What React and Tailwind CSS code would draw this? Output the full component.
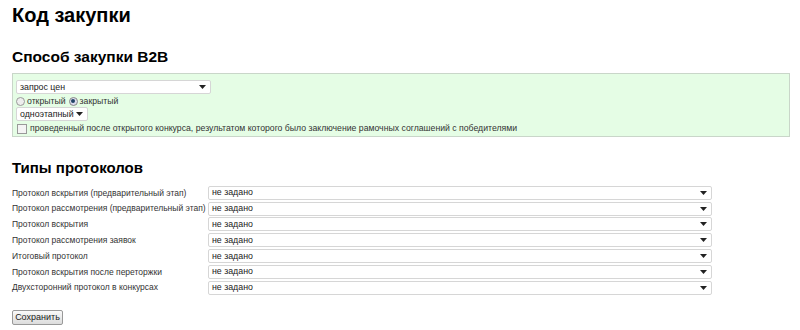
const protocols = [
  'Протокол вскрытия (предварительный этап)',
  'Протокол рассмотрения (предварительный этап)',
  'Протокол вскрытия',
  'Протокол рассмотрения заявок',
  'Итоговый протокол',
  'Протокол вскрытия после переторжки',
  'Двухсторонний протокол в конкурсах',
];

function Arrow() {
  return (
    <svg width="7" height="4" viewBox="0 0 7 4" className="shrink-0">
      <path d="M0 0H7L3.5 4Z" fill="#222" />
    </svg>
  );
}

function FakeSelect({ value, className }) {
  return (
    <div
      className={`h-[14px] flex items-center justify-between bg-white border border-[#d6d6d6] rounded-[2px] pl-[3px] pr-[4px] text-[8.8px] text-[#222] ${className}`}
    >
      <span className="leading-none whitespace-nowrap">{value}</span>
      <Arrow />
    </div>
  );
}

export default function App() {
  return (
    <div className="w-[800px] h-[330px] bg-white px-[12px] font-['Liberation_Sans',Arial,sans-serif] text-[#333] overflow-hidden">
      <h1 className="pt-[3px] text-[20px] font-bold leading-[24px] text-black">Код закупки</h1>

      <h2 className="mt-[21px] text-[15.5px] font-bold leading-[18px] text-black">Способ закупки B2B</h2>

      {/* Green block */}
      <div className="mt-[7px] w-[778px] h-[64px] bg-[#e5fde5] border border-[#c9d6c9] pl-[3px] pt-[6px]">
        <FakeSelect value="запрос цен" className="w-[195px]" />
        <div className="flex items-center h-[12px] text-[8.7px] leading-none mt-[1px]">
          <span className="w-[9px] h-[9px] rounded-full border border-[#999] bg-[#eee] mr-[2px]" />
          <span className="mr-[3px]">открытый</span>
          <span className="w-[9px] h-[9px] rounded-full border border-[#888] bg-[#dde] mr-[2px] flex items-center justify-center">
            <span className="w-[4px] h-[4px] rounded-full bg-[#246]" />
          </span>
          <span>закрытый</span>
        </div>
        <FakeSelect value="одноэтапный" className="w-[72px]" />
        <div className="flex items-center h-[13px] text-[8.7px] leading-none mt-[1px]">
          <span className="w-[10px] h-[10px] border border-[#999] bg-[#f4f4f4] ml-[1px] mr-[3px]" />
          <span>проведенный после открытого конкурса, результатом которого было заключение рамочных соглашений с победителями</span>
        </div>
      </div>

      <h2 className="mt-[22px] text-[15px] font-bold leading-[18px] text-black">Типы протоколов</h2>

      <div className="mt-[8px] flex flex-col">
        {protocols.map((p) => (
          <div key={p} className="h-[15.8px] flex items-center">
            <span className="w-[196px] text-[8.5px] leading-none whitespace-nowrap">{p}</span>
            <FakeSelect value="не задано" className="w-[504px]" />
          </div>
        ))}
      </div>

      <button className="mt-[14px] h-[15px] w-[51px] text-[9px] leading-none text-[#222] border border-[#999] rounded-[2px] bg-gradient-to-b from-[#fafafa] to-[#dcdcdc]">
        Сохранить
      </button>
    </div>
  );
}
